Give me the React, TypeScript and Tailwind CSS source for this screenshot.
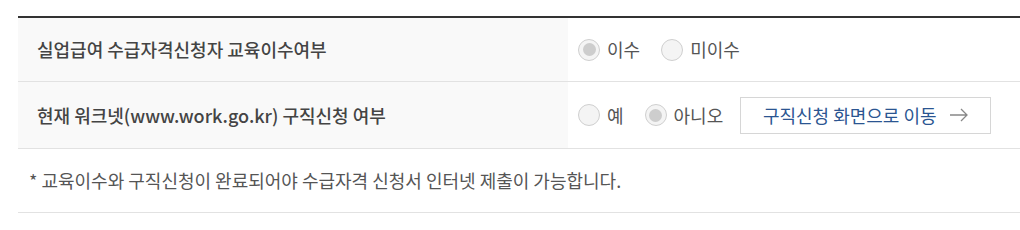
import React from "react";

function Radio({ checked, label }: { checked?: boolean; label: string }) {
  return (
    <label className="flex items-center gap-[7px] text-[18px] text-[#555]">
      <span className="w-[22px] h-[22px] rounded-full border border-[#cfcfcf] bg-[#f4f4f4] flex items-center justify-center">
        {checked && <span className="w-[13px] h-[13px] rounded-full bg-[#cdcdcd]" />}
      </span>
      {label}
    </label>
  );
}

export default function App() {
  return (
    <div
      className="w-[1020px] h-[230px] bg-white pt-[16px] pl-[18px]"
      style={{ fontFamily: '"Noto Sans CJK KR", "Noto Sans", sans-serif' }}
    >
      <div className="border-t-2 border-[#333]">
        <div className="flex border-b border-[#e2e2e2] h-[64px]">
          <div className="w-[550px] bg-[#f9f9f9] flex items-center pl-[19px] text-[18px] font-medium text-[#444]">
            실업급여 수급자격신청자 교육이수여부
          </div>
          <div className="flex-1 flex items-center pl-[10px] gap-[21px]">
            <Radio checked label="이수" />
            <Radio label="미이수" />
          </div>
        </div>
        <div className="flex border-b border-[#e2e2e2] h-[67px]">
          <div className="w-[550px] bg-[#f9f9f9] flex items-center pl-[19px] text-[18px] font-medium text-[#444]">
            현재 워크넷(www.work.go.kr) 구직신청 여부
          </div>
          <div className="flex-1 flex items-center pl-[10px]">
            <Radio label="예" />
            <div className="ml-[21px]">
              <Radio checked label="아니오" />
            </div>
            <button className="ml-[17px] w-[251px] h-[37px] border border-[#d6d6d6] bg-white flex items-center justify-center gap-[12px] text-[18px] text-[#2b5591]">
              구직신청 화면으로 이동
              <svg width="20" height="14" viewBox="0 0 20 14" fill="none" stroke="#888" strokeWidth="1.3">
                <path d="M1 7h17M12 1l6 6-6 6" />
              </svg>
            </button>
          </div>
        </div>
        <div className="flex items-center h-[64px] border-b border-[#e2e2e2] pl-[11px] text-[18px] text-[#555]">
          * 교육이수와 구직신청이 완료되어야 수급자격 신청서 인터넷 제출이 가능합니다.
        </div>
      </div>
    </div>
  );
}
